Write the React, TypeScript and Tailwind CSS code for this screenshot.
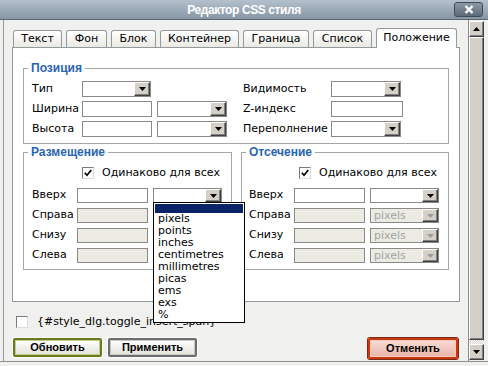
import React from "react"

const bevel =
  "border border-t-white border-l-white border-r-[#404040] border-b-[#404040] shadow-[inset_-1px_-1px_0_#808080] bg-[#d4d0c8]"

function Arrow({ up = false, dim = false }: { up?: boolean; dim?: boolean }) {
  return (
    <svg width="7" height="4" viewBox="0 0 7 4">
      <path d={up ? "M0 4h7L3.5 0z" : "M0 0h7L3.5 4z"} fill={dim ? "#9a9a9a" : "#000"} />
    </svg>
  )
}

function Select({ w, value = "", disabled = false, h = "h-[16px]" }: { w: string; value?: string; disabled?: boolean; h?: string }) {
  return (
    <div className={`flex ${h} ${w} border border-[#898989] ${disabled ? "bg-[#ebebe4]" : "bg-white"}`}>
      <div className="flex-1 overflow-hidden pl-[3px] leading-[13px] text-[#a3a3a3]">{value}</div>
      <div className={`flex w-[16px] items-center justify-center ${bevel}`}>
        <Arrow dim={disabled} />
      </div>
    </div>
  )
}

function Input({ w, disabled = false, h = "h-[16px]" }: { w: string; disabled?: boolean; h?: string }) {
  return <div className={`${h} ${w} border border-[#898989] ${disabled ? "bg-[#ebebe4]" : "bg-white"}`} />
}

function Check({ checked }: { checked?: boolean }) {
  return (
    <div className="flex h-[12px] w-[12px] items-center justify-center border border-t-[#7a7a7a] border-l-[#7a7a7a] border-r-[#dcdcdc] border-b-[#dcdcdc] bg-white">
      {checked && (
        <svg width="8" height="8" viewBox="0 0 8 8">
          <path d="M0.8 3.8 L3 6.2 L7.3 1" fill="none" stroke="#000" strokeWidth="1.7" />
        </svg>
      )}
    </div>
  )
}

function Legend({ children }: { children: React.ReactNode }) {
  return (
    <legend className="ml-[4px] px-[3px] font-['Liberation_Sans',sans-serif] text-[12px] font-bold leading-[14px] text-[#2a64b3]">
      {children}
    </legend>
  )
}

const units = ["pixels", "points", "inches", "centimetres", "millimetres", "picas", "ems", "exs", "%"]

function Placement({ title, open, pl }: { title: string; open?: boolean; pl: string }) {
  const rows = ["Вверх", "Справа", "Снизу", "Слева"]
  return (
    <fieldset className={`${open ? "w-[209px]" : "w-[208px]"} border border-[#a0a8a8]`}>
      <Legend>{title}</Legend>
      <div className={`flex flex-col ${pl} pt-[8px] pb-[6px]`}>
        <div className="flex h-[12px] items-center">
          <div className="ml-[50px]">
            <Check checked />
          </div>
          <span className="ml-[8px]">Одинаково для всех</span>
        </div>
        <div className="mt-[9px] flex flex-col gap-[5px]">
          {rows.map((r, i) => (
            <div key={r} className="flex h-[15px] items-center">
              <span className="w-[45px]">{r}</span>
              <Input w="w-[71px]" h="h-[15px]" disabled={i > 0} />
              <div className="relative ml-[5px]">
                <Select w="w-[69px]" h="h-[15px]" disabled={i > 0} value={i > 0 && !open ? "pixels" : ""} />
                {open && i === 0 && (
                  <div className="absolute left-0 top-[14px] z-20 w-[92px] border border-black bg-white p-[1px]">
                    <div className="h-[9px] bg-[#0a246a]" />
                    {units.map((u) => (
                      <div key={u} className="h-[12px] pl-[3px] leading-[12px]">
                        {u}
                      </div>
                    ))}
                  </div>
                )}
              </div>
            </div>
          ))}
        </div>
      </div>
    </fieldset>
  )
}

const tabs: [string, string, boolean?][] = [
  ["Текст", "w-[49px]"],
  ["Фон", "w-[41px]"],
  ["Блок", "w-[45px]"],
  ["Контейнер", "w-[79px]"],
  ["Граница", "w-[66px]"],
  ["Список", "w-[59px]"],
  ["Положение", "w-[81px]", true],
]

export default function App() {
  return (
    <div className="h-[366px] w-[488px] overflow-hidden bg-[#f0f0ee] font-['DejaVu_Sans',sans-serif] text-[11px] text-black">
      <div className="grid h-[20px] grid-cols-[1fr_auto_1fr] items-center border-b border-[#5b6874] bg-gradient-to-b from-[#b4c1cd] to-[#8796a5]">
        <div />
        <div className="font-['Liberation_Sans',sans-serif] text-[12px] font-bold tracking-[-0.4px] text-white">Редактор CSS стиля</div>
        <div className="flex justify-end pr-[5px]">
          <div className="flex h-[15px] w-[29px] items-center justify-center rounded-[3px] border border-[#3f4b57] bg-gradient-to-b from-[#8c9aa8] to-[#5d6b79]">
            <svg width="10" height="9" viewBox="0 0 10 9">
              <path d="M1.5 1 L8.5 8 M8.5 1 L1.5 8" stroke="#fff" strokeWidth="2.4" />
            </svg>
          </div>
        </div>
      </div>

      <div className="flex h-[342px] border-b border-[#8f8f8f]">
        <div className="w-[3px]" />
        <div className="w-[465px] border-l border-[#9a9a9a] pl-[8px] pt-[8px]">
          <div className="flex h-[19px] items-end gap-[4px] pl-[1px]">
            {tabs.map(([t, w, active]) => (
              <div
                key={t}
                className={`${w} flex items-center justify-center rounded-t-[3px] border border-b-0 border-[#919b9c] ${
                  active ? "relative z-10 -mb-[1px] h-[20px] bg-white pb-[1px]" : "h-[17px] bg-gradient-to-b from-white to-[#eae9e3]"
                }`}
              >
                {t}
              </div>
            ))}
          </div>

          <div className="relative h-[255px] w-[448px] border border-[#919b9c] bg-white pl-[10px] pt-[13px]">
            <fieldset className="w-[426px] border border-[#a0a8a8]">
              <Legend>Позиция</Legend>
              <div className="flex flex-col gap-[4px] pl-[8px] pt-[6px] pb-[6px]">
                <div className="flex h-[16px] items-center">
                  <div className="flex w-[211px] items-center">
                    <span className="w-[50px]">Тип</span>
                    <Select w="w-[69px]" />
                  </div>
                  <span className="w-[88px]">Видимость</span>
                  <Select w="w-[70px]" />
                </div>
                <div className="flex h-[16px] items-center">
                  <div className="flex w-[211px] items-center">
                    <span className="w-[50px]">Ширина</span>
                    <Input w="w-[70px]" />
                    <div className="ml-[5px]">
                      <Select w="w-[70px]" />
                    </div>
                  </div>
                  <span className="w-[88px]">Z-индекс</span>
                  <Input w="w-[72px]" />
                </div>
                <div className="flex h-[16px] items-center">
                  <div className="flex w-[211px] items-center">
                    <span className="w-[50px]">Высота</span>
                    <Input w="w-[70px]" />
                    <div className="ml-[5px]">
                      <Select w="w-[70px]" />
                    </div>
                  </div>
                  <span className="w-[88px]">Переполнение</span>
                  <Select w="w-[70px]" />
                </div>
              </div>
            </fieldset>

            <div className="mt-[1px] flex gap-[9px]">
              <Placement title="Размещение" open pl="pl-[8px]" />
              <Placement title="Отсечение" pl="pl-[7px]" />
            </div>
          </div>

          <div className="mt-[14px] flex h-[12px] items-center">
            <div className="ml-[4px]">
              <Check />
            </div>
            <span className="ml-[9px]">{"{#style_dlg.toggle_insert_span}"}</span>
          </div>

          <div className="mt-[10px] flex w-[456px] items-start font-['Liberation_Sans',sans-serif] text-[11px] font-bold">
            <div className="ml-[1px] flex h-[19px] w-[89px] items-center justify-center rounded-[2px] border-2 border-[#6a7a20] bg-gradient-to-b from-white to-[#e2e2da] shadow-[inset_0_0_0_1px_#c3cd86,0_0_0_1px_#fafafa]">
              Обновить
            </div>
            <div className="ml-[6px] flex h-[19px] w-[89px] items-center justify-center rounded-[2px] border-2 border-[#6e6e6e] bg-gradient-to-b from-white to-[#e2e2da] shadow-[inset_0_0_0_1px_#c8c8c8,0_0_0_1px_#fafafa]">
              Применить
            </div>
            <div className="ml-auto mr-[10px] flex h-[21px] w-[90px] items-center justify-center rounded-[2px] border-2 border-[#c8380e] bg-gradient-to-b from-[#f7dcd5] to-[#eab4a8] shadow-[inset_0_0_0_1px_#f2c9bd,0_0_0_1px_#7a2a1a]">
              Отменить
            </div>
          </div>
        </div>

        <div className="flex w-[16px] flex-col border-l border-[#8a8a8a] py-[1px]">
          <div className={`flex h-[16px] items-center justify-center ${bevel}`}>
            <Arrow up />
          </div>
          <div className={`flex-1 ${bevel}`} />
          <div className="h-[4px] bg-[repeating-conic-gradient(#ffffff_0%_25%,#d4d0c8_0%_50%)] [background-size:2px_2px]" />
          <div className={`flex h-[16px] items-center justify-center ${bevel}`}>
            <Arrow />
          </div>
        </div>
        <div className="flex-1" />
      </div>
    </div>
  )
}
